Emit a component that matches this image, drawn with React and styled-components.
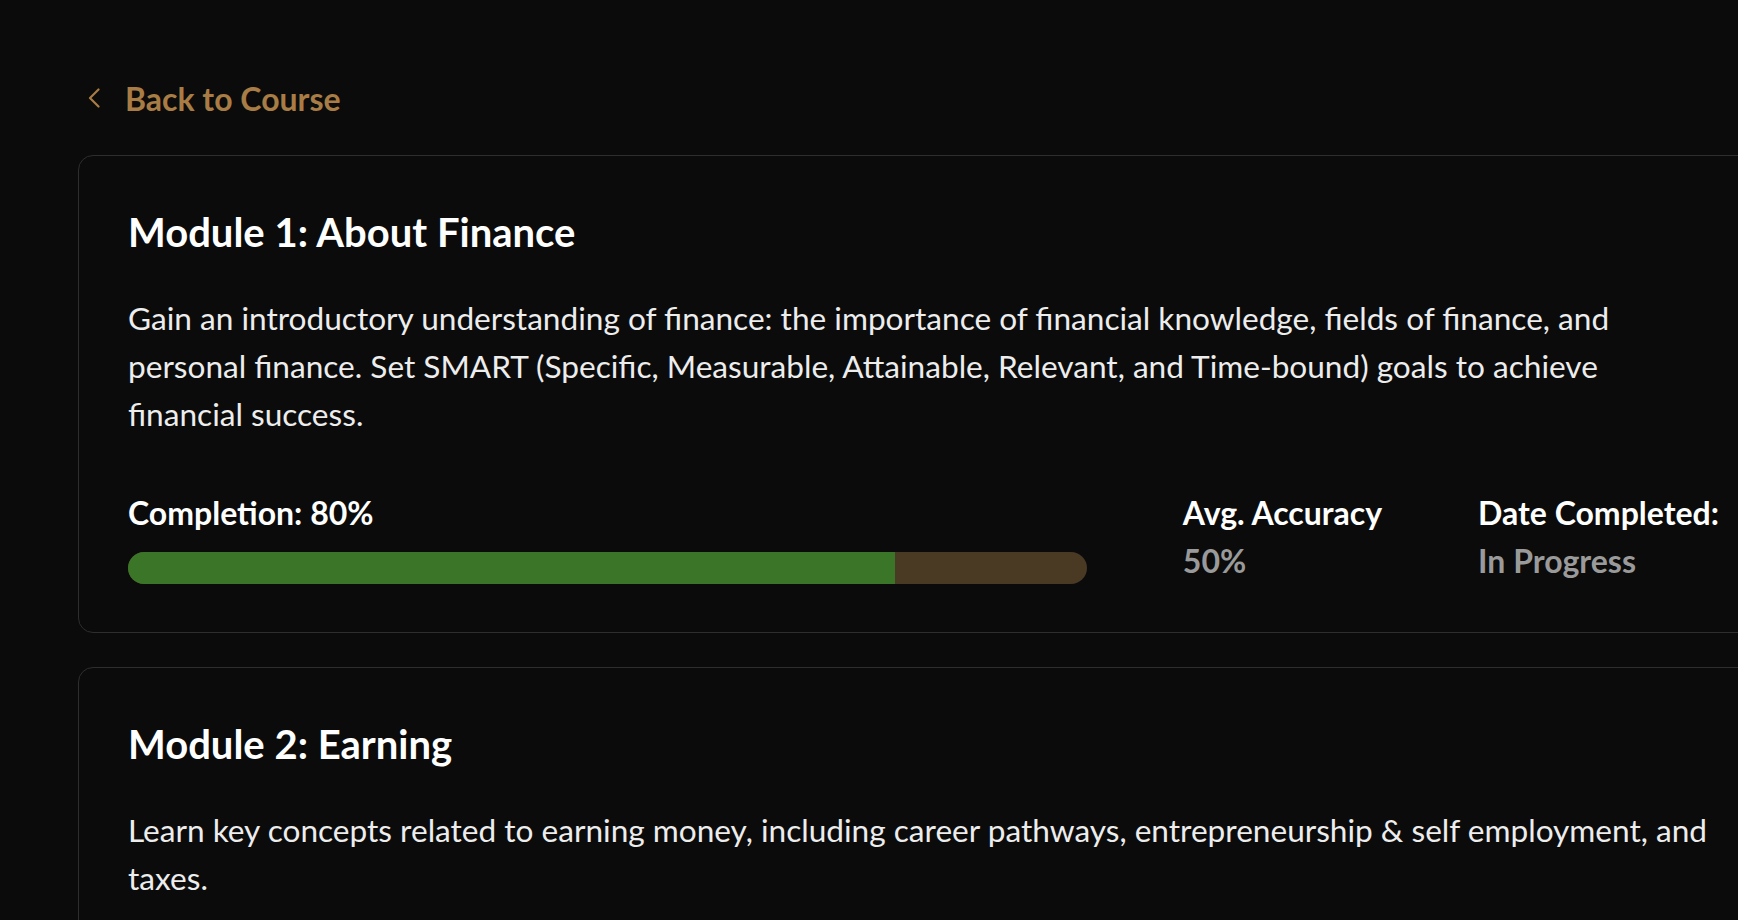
import React from "react";
import styled, { createGlobalStyle } from "styled-components";

const GOLD = "#a87c45";
const BORDER = "#2e2e2e";
const BG = "#0b0b0b";

const modules = [
  {
    id: 1,
    title: "Module 1: About Finance",
    description:
      "Gain an introductory understanding of finance: the importance of financial knowledge, fields of finance, and personal finance. Set SMART (Specific, Measurable, Attainable, Relevant, and Time-bound) goals to achieve financial success.",
    completion: 80,
    accuracy: "50%",
    dateCompleted: "In Progress",
  },
  {
    id: 2,
    title: "Module 2: Earning",
    description:
      "Learn key concepts related to earning money, including career pathways, entrepreneurship & self employment, and taxes.",
    completion: 40,
    accuracy: "—",
    dateCompleted: "In Progress",
  },
];

function ChevronLeft() {
  return (
    <svg width="12" height="20" viewBox="0 0 12 20" fill="none">
      <path
        d="M10.5 1.5 2 10l8.5 8.5"
        stroke={GOLD}
        strokeWidth="2.2"
        strokeLinecap="round"
        strokeLinejoin="round"
      />
    </svg>
  );
}

function ModuleCard({ module }) {
  return (
    <Card>
      <Title>{module.title}</Title>
      <Description>{module.description}</Description>
      <Stats>
        <ProgressBlock>
          <Label>Completion: {module.completion}%</Label>
          <Track>
            <Fill style={{ width: `${module.completion}%` }} />
          </Track>
        </ProgressBlock>
        <Stat>
          <Label>Avg. Accuracy</Label>
          <Value>{module.accuracy}</Value>
        </Stat>
        <Stat>
          <Label>Date Completed:</Label>
          <Value>{module.dateCompleted}</Value>
        </Stat>
      </Stats>
    </Card>
  );
}

function App() {
  return (
    <>
      <GlobalStyle />
      <Page>
        <BackLink href="#">
          <ChevronLeft />
          <span>Back to Course</span>
        </BackLink>
        <CardList>
          {modules.map((module) => (
            <ModuleCard key={module.id} module={module} />
          ))}
        </CardList>
      </Page>
    </>
  );
}

const GlobalStyle = createGlobalStyle`
  html, body {
    margin: 0;
    background: ${BG};
    overflow: hidden;
  }
  body {
    font-family: Lato, "Noto Sans", sans-serif;
    color: #f4f4f4;
  }
  * {
    box-sizing: border-box;
  }
`;

const Page = styled.div`
  padding: 78px 0 0 78px;
  width: 1800px;
  height: 920px;
  overflow: hidden;
`;

const BackLink = styled.a`
  display: inline-flex;
  align-items: center;
  gap: 25px;
  margin-left: 10px;
  height: 40px;
  color: ${GOLD};
  font-size: 32px;
  font-weight: 700;
  text-decoration: none;
`;

const CardList = styled.div`
  display: flex;
  flex-direction: column;
  gap: 34px;
  margin-top: 37px;
`;

const Card = styled.section`
  width: 1692px;
  border: 1px solid ${BORDER};
  border-radius: 15px;
  background: ${BG};
  padding: 52px 50px 48px 49px;
`;

const Title = styled.h2`
  margin: 0;
  font-size: 40px;
  line-height: 48px;
  font-weight: 700;
  color: #ffffff;
`;

const Description = styled.p`
  margin: 38px 6px 0 0;
  font-size: 31.6px;
  line-height: 48px;
  font-weight: 400;
  color: #ededed;
`;

const Stats = styled.div`
  display: flex;
  align-items: flex-start;
  gap: 96px;
  margin-top: 56px;
`;

const ProgressBlock = styled.div`
  flex: 1;
  display: flex;
  flex-direction: column;
  gap: 20px;
`;

const Stat = styled.div`
  display: flex;
  flex-direction: column;
  gap: 10px;
`;

const Label = styled.div`
  font-size: 32px;
  line-height: 38px;
  font-weight: 700;
  color: #ffffff;
`;

const Value = styled.div`
  font-size: 32px;
  line-height: 38px;
  font-weight: 700;
  color: #9a9a9a;
`;

const Track = styled.div`
  height: 32px;
  border-radius: 16px;
  background: #4a3923;
  overflow: hidden;
`;

const Fill = styled.div`
  height: 100%;
  background: #3b7628;
`;

export default App;
